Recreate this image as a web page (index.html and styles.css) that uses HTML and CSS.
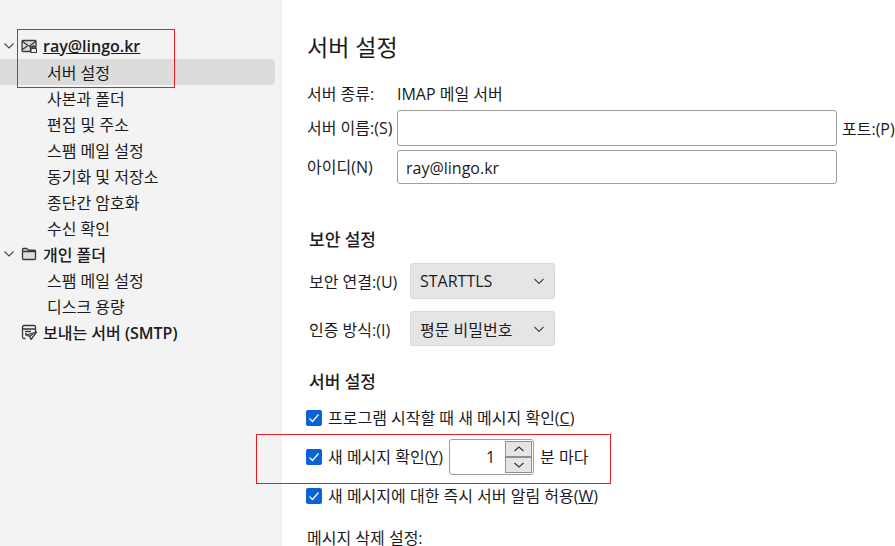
FILE: index.html
```html
<!DOCTYPE html>
<html lang="ko">
<head>
<meta charset="utf-8">
<title>서버 설정</title>
<link rel="stylesheet" href="styles.css">
</head>
<body>
<div class="app">
  <aside class="sidebar">
    <div class="row top">
      <svg class="chev" viewBox="0 0 12 12"><path d="M1.500 3.500 6 8l4.500-4.500"/></svg>
      <svg class="ico" viewBox="0 0 16 16"><path class="tint" d="M2 2.500h12a1 1 0 0 1 1 1V9H9.500v4.500H2a1 1 0 0 1-1-1v-9a1 1 0 0 1 1-1zM1.500 3.500l5.500 4-5.500 4M14.500 3.500 8 8.500"/><rect class="lock" x="10" y="10.500" width="5.500" height="4" rx=".6"/><path d="M11.300 10.500V9.300a1.400 1.400 0 0 1 2.800 0v1.200"/></svg>
      <span class="acct">ray@lingo.kr</span>
    </div>
    <div class="row sub selected"><span class="nudge">서버 설정</span></div>
    <div class="row sub"><span class="nudge">사본과 폴더</span></div>
    <div class="row sub"><span class="nudge">편집 및 주소</span></div>
    <div class="row sub"><span class="nudge">스팸 메일 설정</span></div>
    <div class="row sub"><span class="nudge">동기화 및 저장소</span></div>
    <div class="row sub"><span class="nudge">종단간 암호화</span></div>
    <div class="row sub"><span class="nudge">수신 확인</span></div>
    <div class="row top">
      <svg class="chev" viewBox="0 0 12 12"><path d="M1.500 3.500 6 8l4.500-4.500"/></svg>
      <svg class="ico" viewBox="0 0 16 16"><path class="tint" d="M1.500 12.500v-9a1 1 0 0 1 1-1h3.200l1.600 1.600h6.200a1 1 0 0 1 1 1v7.400a1 1 0 0 1-1 1h-11a1 1 0 0 1-1-1zM1.500 5.500h13"/></svg>
      <span class="nudge">개인 폴더</span>
    </div>
    <div class="row sub"><span class="nudge">스팸 메일 설정</span></div>
    <div class="row sub"><span class="nudge">디스크 용량</span></div>
    <div class="row top">
      <span class="chev"></span>
      <svg class="ico" viewBox="0 0 16 16"><path d="M4.500 14.500H3a1.500 1.500 0 0 1-1.500-1.500V3A1.500 1.500 0 0 1 3 1.500h10A1.500 1.500 0 0 1 14.500 3v5M1.500 5h13M4 7.500h6M4 10h2"/><path class="plane" d="M15.500 8 5.500 11l3.200 1.300 1.300 3.200zM8.700 12.300 12 10"/></svg>
      <span class="nudge">보내는 서버 <span class="latin">(SMTP)</span></span>
    </div>
  </aside>
  <main class="content">
    <h1 class="title">서버 설정</h1>
    <div class="grid">
      <span class="lab head">서버 종류:</span><span class="lab head">IMAP 메일 서버</span>
      <label class="lab">서버 이름:(S)</label>
      <div class="inline"><div class="input"></div><span class="port">포트:(P)</span></div>
      <label class="lab">아이디(N)</label>
      <div class="input id">ray@lingo.kr</div>
    </div>
    <h2 class="sec first">보안 설정</h2>
    <div class="selrow"><span class="sellab">보안 연결:(U)</span><div class="select"><span>STARTTLS</span><svg class="arrow" viewBox="0 0 12 12"><path d="M1.500 4 6 8.500 10.500 4"/></svg></div></div>
    <div class="selrow second"><span class="sellab">인증 방식:(I)</span><div class="select"><span>평문 비밀번호</span><svg class="arrow" viewBox="0 0 12 12"><path d="M1.500 4 6 8.500 10.500 4"/></svg></div></div>
    <h2 class="sec">서버 설정</h2>
    <div class="check"><span class="box"><svg viewBox="0 0 16 16"><path d="M3.500 8.500 6.500 11.500 12.500 4.500"/></svg></span><span class="txt">프로그램 시작할 때 새 메시지 확인(<u>C</u>)</span></div>
    <div class="check spin-row"><span class="box"><svg viewBox="0 0 16 16"><path d="M3.500 8.500 6.500 11.500 12.500 4.500"/></svg></span><span class="txt">새 메시지 확인(<u>Y</u>)</span>
      <div class="spin"><span class="num">1</span><div class="btns"><span class="btn"><svg viewBox="0 0 12 8"><path d="M1.500 6 6 2l4.500 4"/></svg></span><span class="btn"><svg viewBox="0 0 12 8"><path d="M1.500 2 6 6l4.500-4"/></svg></span></div></div>
      <span class="txt">분 마다</span></div>
    <div class="check"><span class="box"><svg viewBox="0 0 16 16"><path d="M3.500 8.500 6.500 11.500 12.500 4.500"/></svg></span><span class="txt">새 메시지에 대한 즉시 서버 알림 허용(<u>W</u>)</span></div>
    <p class="last">메시지 삭제 설정:</p>
  </main>
  <div class="mark mark-a"></div>
  <div class="mark mark-b"></div>
</div>
</body>
</html>
```
FILE: styles.css
```css
* { box-sizing: border-box; }
html, body { margin: 0; height: 100%; overflow: hidden; background: #fff; }
body { font-family: "Open Sans", "Noto Sans CJK KR", sans-serif; font-size: 16px; color: #1c1b22; }
.app { position: relative; display: flex; width: 895px; height: 546px; overflow: hidden; }
.sidebar { width: 282px; flex: none; background: #f3f3f3; padding-top: 33px; padding-right: 7px; }
.row { height: 26px; display: flex; align-items: center; white-space: nowrap; line-height: 24px; }
.nudge { padding-top: 2px; }
.sub { padding-left: 47px; }
.selected { background: #dcdcdc; border-radius: 0 4px 4px 0; }
.top { padding-left: 3px; font-weight: 500; }
.latin { font-weight: 600; }
.chev { width: 12px; height: 12px; flex: none; margin-right: 6px; }
.chev path { fill: none; stroke: #45454a; stroke-width: 1.1; }
.ico { width: 16px; height: 16px; flex: none; margin-right: 6px; }
.ico path { fill: none; stroke: #38383d; stroke-width: 1.3; }
.ico .tint { fill: #dcdcdc; }
.ico .lock { fill: #f3f3f3; stroke: #38383d; stroke-width: 1.2; }
.ico .plane { fill: #f3f3f3; }
.acct { text-decoration: underline; font-weight: 600; }
.content { flex: 1; padding: 30px 0 0 25px; min-width: 0; }
.title { margin: 0 0 19px; font-size: 23px; line-height: 34px; font-weight: 400; }
.grid { display: grid; grid-template-columns: 90px 440px; grid-template-rows: 23px 36px 34px; align-items: center; row-gap: 4px; }
.lab { line-height: 22px; white-space: nowrap; }
.head { align-self: start; }
.inline { display: flex; align-items: center; width: 600px; }
.input { width: 440px; height: 36px; border: 1px solid #9e9e9e; border-radius: 3px; background: #fff; padding: 0 8px; line-height: 32px; flex: none; }
.input.id { height: 34px; line-height: 34px; }
.port { margin-left: 5px; white-space: nowrap; }
.sec { margin: 25px 0 12px; font-size: 17px; line-height: 22px; font-weight: 500; padding-left: 2px; }
.first { margin-top: 45px; }
.selrow { display: flex; align-items: center; height: 36px; padding-left: 2px; }
.second { margin-top: 12px; height: 35px; }
.sellab { width: 101px; white-space: nowrap; }
.select { width: 145px; height: 100%; background: #e5e5e5; border: 1px solid #d8d8d8; border-radius: 3px; display: flex; align-items: center; justify-content: space-between; padding: 0 9px; }
.arrow { width: 12px; height: 12px; }
.arrow path { fill: none; stroke: #45454a; stroke-width: 1.1; }
.check { display: flex; align-items: center; height: 26px; white-space: nowrap; margin: 0 0 8px -1px; }
.txt { padding-bottom: 2px; }
.box { width: 16px; height: 16px; background: #0a62d8; border-radius: 2px; margin-right: 6px; flex: none; }
.box svg { display: block; width: 16px; height: 16px; }
.box path { fill: none; stroke: #fff; stroke-width: 1.2; }
.spin-row { height: 36px; }
.spin { display: flex; width: 85px; height: 36px; border: 1px solid #9e9e9e; border-radius: 3px; margin: 0 6px; padding: 1px; }
.num { flex: 1; text-align: right; padding-right: 10px; line-height: 32px; }
.btns { width: 27px; display: flex; flex-direction: column; }
.btn { flex: 1; background: #e5e5e5; border: 1px solid #8f8f8f; display: flex; align-items: center; justify-content: center; }
.btn svg { width: 12px; height: 8px; }
.btn path { fill: none; stroke: #333; stroke-width: 1.1; }
.last { margin: 18px 0 0; line-height: 22px; }
.mark { position: absolute; border: 1px solid #ed1c24; pointer-events: none; }
.mark-a { left: 17px; top: 29px; width: 158px; height: 59px; }
.mark-b { left: 256px; top: 434px; width: 355px; height: 50px; }
```
